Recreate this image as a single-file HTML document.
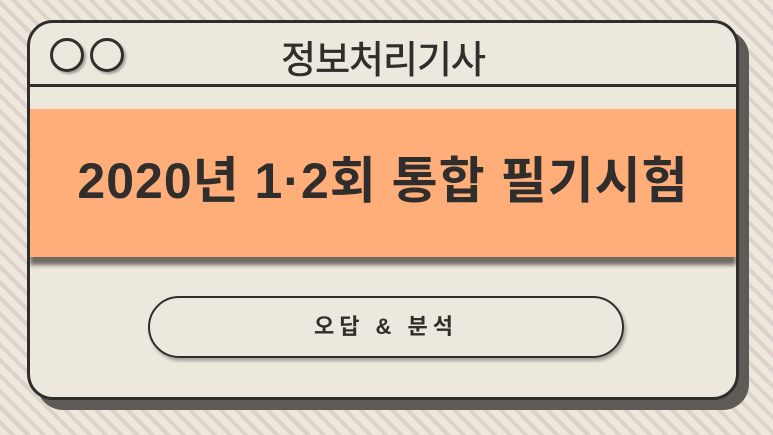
<!DOCTYPE html>
<html><head><meta charset="utf-8"><style>
html,body{margin:0;padding:0}
body{width:773px;height:435px;overflow:hidden;position:relative;
background:repeating-linear-gradient(45deg,#ede7dc 0 7px,#ddd2cb 7px 11px);
font-family:"Liberation Sans","Noto Sans CJK KR",sans-serif;}
.shadow{position:absolute;left:37px;top:30px;width:712px;height:380px;border-radius:26px;background:#5e5a55;}
.win{position:absolute;left:27px;top:20px;width:706px;height:374px;border:3px solid #2f2e2c;border-radius:26px;background:#ede8dd;overflow:hidden}
.hline{position:absolute;left:0;right:0;top:61px;height:3px;background:#2f2e2c}
.c{position:absolute;top:15px;width:28px;height:28px;border:3px solid #2f2e2c;border-radius:50%;box-shadow:2px 2px 2px rgba(0,0,0,.3)}
.title{position:absolute;left:0;right:0;top:6px;text-align:center;font-size:38px;color:#2f2e2c;letter-spacing:-1px;-webkit-text-stroke:0.6px #2f2e2c}
.oshadow{position:absolute;left:0;right:0;top:94px;height:148px;background:#6e6a63;filter:blur(2px)}
.orange{position:absolute;left:0;right:0;top:86px;height:148px;background:#ffae7a}
.main{position:absolute;left:0;right:0;top:128px;text-align:center;font-size:50px;font-weight:bold;color:#2f2e2c;letter-spacing:1px;line-height:60px}
.pill{position:absolute;left:118px;top:273px;width:472px;height:58px;border:2px solid #2f2e2c;border-radius:32px;box-shadow:2px 3px 3px rgba(0,0,0,.3);text-align:center;line-height:58px;font-size:22px;font-weight:bold;color:#2f2e2c;letter-spacing:5px}
</style></head><body>
<div class="shadow"></div>
<div class="win">
<div class="c" style="left:20px"></div><div class="c" style="left:60px"></div>
<div class="title">정보처리기사</div>
<div class="hline"></div>
<div class="oshadow"></div>
<div class="orange"></div>
<div class="main">2020년 1·2회 통합 필기시험</div>
<div class="pill">오답 &amp; 분석</div>
</div>
</body></html>
